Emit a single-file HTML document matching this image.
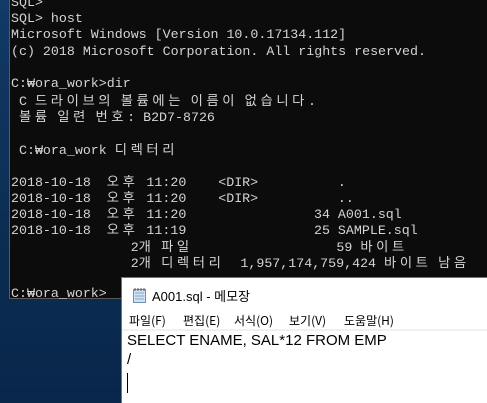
<!DOCTYPE html>
<html><head><meta charset="utf-8"><style>
html,body{margin:0;padding:0;width:487px;height:403px;overflow:hidden;background:#0b2d52;}
body{position:relative;background:linear-gradient(180deg,#123a66 0%,#0b2d52 60%,#08264a 100%);}
#con{position:absolute;left:9px;top:0;width:478px;height:298px;background:#0c0c0c;border-left:1px solid #5a5a5a;border-bottom:1px solid #5a5a5a;}
.l{position:absolute;left:1px;white-space:pre;font-family:"Liberation Mono","Noto Sans CJK KR",monospace;font-size:13.3px;color:#d4d4d4;line-height:16px;height:16px;}
.k{font-family:"Noto Sans CJK KR","NanumGothic",sans-serif;letter-spacing:3.6px;}
#np{position:absolute;left:121px;top:277px;width:366px;height:126px;background:#fff;border-left:1px solid #3c7fc4;border-top:1px solid #3c7fc4;}
#tt{position:absolute;left:30px;top:8px;font-family:"Liberation Sans","Noto Sans CJK KR",sans-serif;font-size:13px;color:#000;}
.m{position:absolute;top:34px;font-family:"Noto Sans CJK KR","Liberation Sans",sans-serif;font-size:12px;color:#000;white-space:pre;}
#sep{position:absolute;left:0;right:0;top:51px;height:2px;background:#f0f0f0;}
.t{position:absolute;left:5px;font-family:"Liberation Sans",sans-serif;font-size:15px;color:#000;}
#cur{position:absolute;left:5px;top:95px;width:1px;height:20px;background:#000;}
</style></head><body>
<div id="con">
<div class="l" style="top:-5px">SQL&gt;</div>
<div class="l" style="top:11px">SQL&gt; host</div>
<div class="l" style="top:27px">Microsoft Windows [Version 10.0.17134.112]</div>
<div class="l" style="top:44px">(c) 2018 Microsoft Corporation. All rights reserved.</div>
<div class="l" style="top:76px">C:₩ora_work&gt;dir</div>
<div class="l" style="top:92px"> C <span class="k">드라이브의 볼륨에는 이름이 없습니다</span>.</div>
<div class="l" style="top:108px"> <span class="k">볼륨 일련 번호</span>: B2D7-8726</div>
<div class="l" style="top:141px"> C:₩ora_work <span class="k">디렉터리</span></div>
<div class="l" style="top:173px">2018-10-18  <span class="k">오후</span> 11:20    &lt;DIR&gt;          .</div>
<div class="l" style="top:189px">2018-10-18  <span class="k">오후</span> 11:20    &lt;DIR&gt;          ..</div>
<div class="l" style="top:205px">2018-10-18  <span class="k">오후</span> 11:20                34 A001.sql</div>
<div class="l" style="top:221px">2018-10-18  <span class="k">오후</span> 11:19                25 SAMPLE.sql</div>
<div class="l" style="top:238px">               2<span class="k">개 파일</span>                  59 <span class="k">바이트</span></div>
<div class="l" style="top:254px">               2<span class="k">개 디렉터리</span>  1,957,174,759,424 <span class="k">바이트 남음</span></div>
<div class="l" style="top:286px">C:₩ora_work&gt;</div>
</div>
<div id="np">
<svg style="position:absolute;left:10px;top:9px" width="15" height="16" viewBox="0 0 15 16"><rect x="1.5" y="2.5" width="12" height="13" fill="#cfe3f5" stroke="#6d8fb0"/><path d="M3 6h9M3 9h9M3 12h9" stroke="#8aa8c6"/><path d="M3 1v3M6 1v3M9 1v3M12 1v3" stroke="#555"/></svg>
<div id="tt">A001.sql - 메모장</div>
<div class="m" style="left:7px">파일(F)</div>
<div class="m" style="left:61px">편집(E)</div>
<div class="m" style="left:112px">서식(O)</div>
<div class="m" style="left:167px">보기(V)</div>
<div class="m" style="left:222px">도움말(H)</div>
<div id="sep"></div>
<div class="t" style="top:54px">SELECT ENAME, SAL*12 FROM EMP</div>
<div class="t" style="top:73px">/</div>
<div id="cur"></div>
</div>
</body></html>
